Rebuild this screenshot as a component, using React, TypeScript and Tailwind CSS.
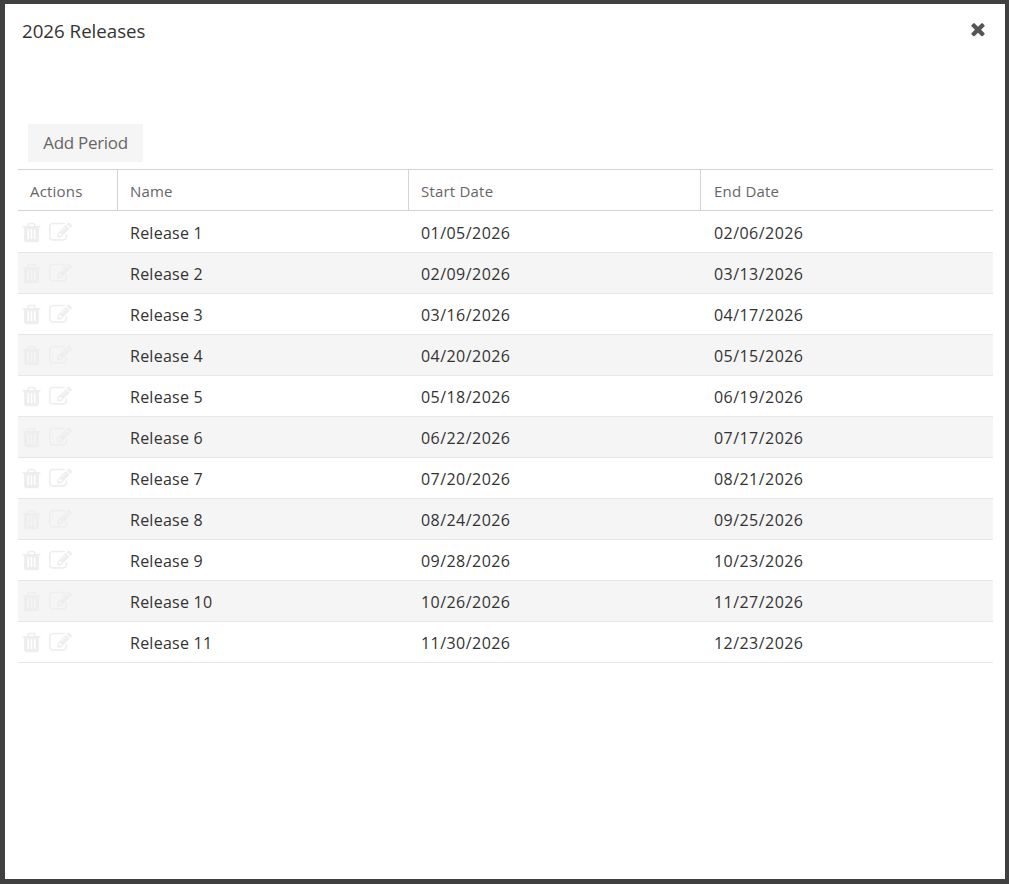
const releases = [
  ['Release 1', '01/05/2026', '02/06/2026'],
  ['Release 2', '02/09/2026', '03/13/2026'],
  ['Release 3', '03/16/2026', '04/17/2026'],
  ['Release 4', '04/20/2026', '05/15/2026'],
  ['Release 5', '05/18/2026', '06/19/2026'],
  ['Release 6', '06/22/2026', '07/17/2026'],
  ['Release 7', '07/20/2026', '08/21/2026'],
  ['Release 8', '08/24/2026', '09/25/2026'],
  ['Release 9', '09/28/2026', '10/23/2026'],
  ['Release 10', '10/26/2026', '11/27/2026'],
  ['Release 11', '11/30/2026', '12/23/2026'],
]

function TrashIcon() {
  return (
    <svg viewBox="0 0 1792 1792" className="w-[23px] h-[23px]" fill="currentColor">
      <path d="M704 1376v-704q0-14-9-23t-23-9h-64q-14 0-23 9t-9 23v704q0 14 9 23t23 9h64q14 0 23-9t9-23zm256 0v-704q0-14-9-23t-23-9h-64q-14 0-23 9t-9 23v704q0 14 9 23t23 9h64q14 0 23-9t9-23zm256 0v-704q0-14-9-23t-23-9h-64q-14 0-23 9t-9 23v704q0 14 9 23t23 9h64q14 0 23-9t9-23zm-544-992h448l-48-117q-7-9-17-11h-317q-10 2-17 11zm928 32v64q0 14-9 23t-23 9h-96v948q0 83-47 143.500t-113 60.500h-832q-66 0-113-58.500t-47-141.500v-952h-96q-14 0-23-9t-9-23v-64q0-14 9-23t23-9h309l70-167q15-37 54-63t79-26h320q40 0 79 26t54 63l70 167h309q14 0 23 9t9 23z" />
    </svg>
  )
}

function EditIcon() {
  return (
    <svg viewBox="0 0 1792 1792" className="w-[23px] h-[23px]" fill="currentColor">
      <path d="M888 1184l116-116-152-152-116 116v56h96v96h56zm440-720q-16-16-33 1l-350 350q-17 17-1 33t33-1l350-350q17-17 1-33zm80 594v190q0 119-84.500 203.500t-203.500 84.500h-832q-119 0-203.500-84.500t-84.500-203.500v-832q0-119 84.500-203.500t203.500-84.500h832q63 0 117 25 15 7 18 23 3 17-9 29l-49 49q-14 14-32 8-23-6-45-6h-832q-66 0-113 47t-47 113v832q0 66 47 113t113 47h832q66 0 113-47t47-113v-126q0-13 9-22l64-64q15-15 35-7t20 29zm-96-738l288 288-672 672h-288v-288zm444 132l-92 92-288-288 92-92q28-28 68-28t68 28l152 152q28 28 28 68t-28 68z" />
    </svg>
  )
}

function CloseIcon() {
  return (
    <svg viewBox="0 0 1792 1792" className="w-[20px] h-[20px]" fill="currentColor">
      <path d="M1490 1322q0 40-28 68l-136 136q-28 28-68 28t-68-28l-294-294-294 294q-28 28-68 28t-68-28l-136-136q-28-28-28-68t28-68l294-294-294-294q-28-28-28-68t28-68l136-136q28-28 68-28t68 28l294 294 294-294q28-28 68-28t68 28l136 136q28 28 28 68t-28 68l-294 294 294 294q28 28 28 68z" />
    </svg>
  )
}

export default function App() {
  return (
    <div className="w-[1009px] h-[884px] bg-white border-[#404040] border-t-4 border-r-4 border-b-[5px] border-l-[5px] font-['Open_Sans','Liberation_Sans',sans-serif] overflow-hidden">
      {/* Title */}
      <div className="flex justify-between items-start h-[120px] pl-[17px] pr-[17px] pt-[14px]">
        <div className="text-[18.7px] leading-[26px] text-[#333333]">2026 Releases</div>
        <button className="text-[#555555] mt-[1px]"><CloseIcon /></button>
      </div>

      <div className="pl-[23px]">
        <button className="w-[115px] h-[38px] bg-[#f5f5f5] text-[17px] tracking-[-0.3px] text-[#666666]">Add Period</button>
      </div>

      {/* Periods */}
      <div className="ml-[13px] mt-[7px] w-[975px]">
        <div className="grid grid-cols-[100px_291px_292px_292px] h-[42px] border-y border-[#d3d3d3] text-[15px] tracking-[0.2px] text-[#666666]">
          <div className="flex items-center pt-[2px] pl-[12px] border-r border-[#d3d3d3]">Actions</div>
          <div className="flex items-center pt-[2px] pl-[12px] border-r border-[#d3d3d3]">Name</div>
          <div className="flex items-center pt-[2px] pl-[12px] border-r border-[#d3d3d3]">Start Date</div>
          <div className="flex items-center pt-[2px] pl-[13px]">End Date</div>
        </div>
        {releases.map((r, i) => (
          <div
            key={r[0]}
            className={`grid grid-cols-[100px_291px_292px_292px] border-b border-[#e6e6e6] text-[16px] text-[#333333] ${i === 0 ? 'h-[42px]' : 'h-[41px]'} ${i % 2 === 1 ? 'bg-[#f5f5f5]' : 'bg-white'}`}
          >
            <div className="flex items-center gap-[6px] pl-[2px] pt-[1px] text-[#eeeeee]">
              <TrashIcon />
              <EditIcon />
            </div>
            <div className="flex items-center pl-[12px] pt-[2px] tracking-[0.25px]">{r[0]}</div>
            <div className="flex items-center pl-[12px] pt-[2px] tracking-[0.45px]">{r[1]}</div>
            <div className="flex items-center pl-[13px] pt-[2px] tracking-[0.45px]">{r[2]}</div>
          </div>
        ))}
      </div>
    </div>
  )
}
